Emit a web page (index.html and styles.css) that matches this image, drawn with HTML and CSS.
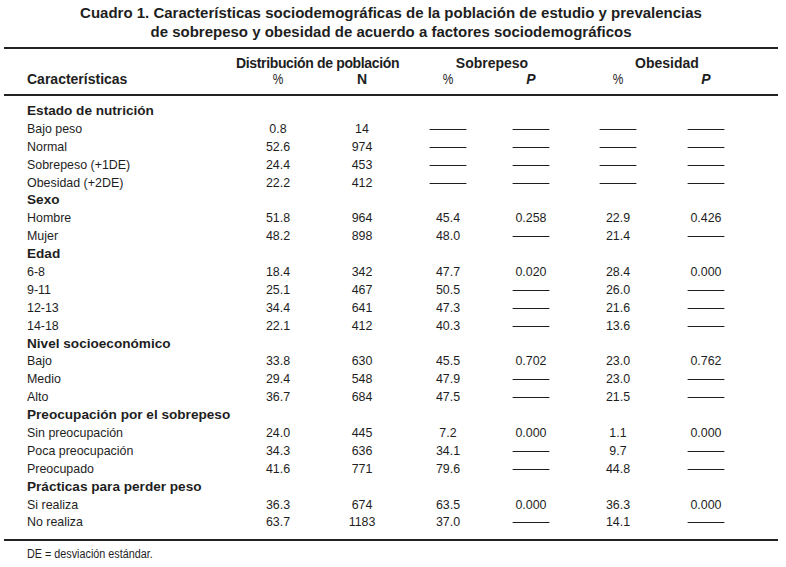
FILE: index.html
```html
<!DOCTYPE html>
<html lang="es">
<head>
<meta charset="utf-8">
<title>Cuadro 1</title>
<link rel="stylesheet" href="styles.css">
</head>
<body>
<div class="page">
  <h1 class="title">Cuadro 1. Características sociodemográficas de la población de estudio y prevalencias<br>de sobrepeso y obesidad de acuerdo a factores sociodemográficos</h1>
  <div class="table">
    <div class="thead">
      <div class="row hrow">
        <span></span>
        <span class="span2 g-dist">Distribución de población</span>
        <span class="span2 g-sob">Sobrepeso</span>
        <span class="span2 g-obe">Obesidad</span>
        <span></span>
      </div>
      <div class="row hrow">
        <span class="hlab">Características</span>
        <span class="pct">%</span>
        <span>N</span>
        <span class="pct">%</span>
        <span class="pv">P</span>
        <span class="pct">%</span>
        <span class="pv">P</span>
        <span></span>
      </div>
    </div>
    <div class="tbody">
      <div class="row sec"><span class="slab">Estado de nutrición</span></div>
      <div class="row"><span class="lab">Bajo peso</span><span>0.8</span><span>14</span><span><i class="dash"></i></span><span><i class="dash"></i></span><span><i class="dash"></i></span><span><i class="dash"></i></span><span></span></div>
      <div class="row"><span class="lab">Normal</span><span>52.6</span><span>974</span><span><i class="dash"></i></span><span><i class="dash"></i></span><span><i class="dash"></i></span><span><i class="dash"></i></span><span></span></div>
      <div class="row"><span class="lab">Sobrepeso (+1DE)</span><span>24.4</span><span>453</span><span><i class="dash"></i></span><span><i class="dash"></i></span><span><i class="dash"></i></span><span><i class="dash"></i></span><span></span></div>
      <div class="row"><span class="lab">Obesidad (+2DE)</span><span>22.2</span><span>412</span><span><i class="dash"></i></span><span><i class="dash"></i></span><span><i class="dash"></i></span><span><i class="dash"></i></span><span></span></div>

      <div class="row sec"><span class="slab">Sexo</span></div>
      <div class="row"><span class="lab">Hombre</span><span>51.8</span><span>964</span><span>45.4</span><span>0.258</span><span>22.9</span><span>0.426</span><span></span></div>
      <div class="row"><span class="lab">Mujer</span><span>48.2</span><span>898</span><span>48.0</span><span><i class="dash"></i></span><span>21.4</span><span><i class="dash"></i></span><span></span></div>

      <div class="row sec"><span class="slab">Edad</span></div>
      <div class="row"><span class="lab">6-8</span><span>18.4</span><span>342</span><span>47.7</span><span>0.020</span><span>28.4</span><span>0.000</span><span></span></div>
      <div class="row"><span class="lab">9-11</span><span>25.1</span><span>467</span><span>50.5</span><span><i class="dash"></i></span><span>26.0</span><span><i class="dash"></i></span><span></span></div>
      <div class="row"><span class="lab">12-13</span><span>34.4</span><span>641</span><span>47.3</span><span><i class="dash"></i></span><span>21.6</span><span><i class="dash"></i></span><span></span></div>
      <div class="row"><span class="lab">14-18</span><span>22.1</span><span>412</span><span>40.3</span><span><i class="dash"></i></span><span>13.6</span><span><i class="dash"></i></span><span></span></div>

      <div class="row sec"><span class="slab">Nivel socioeconómico</span></div>
      <div class="row"><span class="lab">Bajo</span><span>33.8</span><span>630</span><span>45.5</span><span>0.702</span><span>23.0</span><span>0.762</span><span></span></div>
      <div class="row"><span class="lab">Medio</span><span>29.4</span><span>548</span><span>47.9</span><span><i class="dash"></i></span><span>23.0</span><span><i class="dash"></i></span><span></span></div>
      <div class="row"><span class="lab">Alto</span><span>36.7</span><span>684</span><span>47.5</span><span><i class="dash"></i></span><span>21.5</span><span><i class="dash"></i></span><span></span></div>

      <div class="row sec"><span class="slab">Preocupación por el sobrepeso</span></div>
      <div class="row"><span class="lab">Sin preocupación</span><span>24.0</span><span>445</span><span>7.2</span><span>0.000</span><span>1.1</span><span>0.000</span><span></span></div>
      <div class="row"><span class="lab">Poca preocupación</span><span>34.3</span><span>636</span><span>34.1</span><span><i class="dash"></i></span><span>9.7</span><span><i class="dash"></i></span><span></span></div>
      <div class="row"><span class="lab">Preocupado</span><span>41.6</span><span>771</span><span>79.6</span><span><i class="dash"></i></span><span>44.8</span><span><i class="dash"></i></span><span></span></div>

      <div class="row sec"><span class="slab">Prácticas para perder peso</span></div>
      <div class="row"><span class="lab">Si realiza</span><span>36.3</span><span>674</span><span>63.5</span><span>0.000</span><span>36.3</span><span>0.000</span><span></span></div>
      <div class="row"><span class="lab">No realiza</span><span>63.7</span><span>1183</span><span>37.0</span><span><i class="dash"></i></span><span>14.1</span><span><i class="dash"></i></span><span></span></div>
    </div>
  </div>
  <p class="note"><span class="note-t">DE = desviación estándar.</span></p>
</div>
</body>
</html>
```

FILE: styles.css
```css
html, body {
  margin: 0;
  padding: 0;
  background: #ffffff;
}

body {
  color: #1e1e1e;
  font-family: "Liberation Sans", Arial, sans-serif;
}

.page {
  width: 774px;
  padding: 3px 8px 0 4px;
}

.title {
  margin: 0 0 6px 0;
  font-weight: bold;
  font-size: 15px;
  line-height: 19px;
  text-align: center;
  white-space: nowrap;
}

.table {
  width: 774px;
}

.thead {
  border-top: 2px solid #222;
  border-bottom: 2px solid #222;
  padding: 6px 0 7px 0;
}

.row {
  display: grid;
  grid-template-columns: 232px 84px 84px 88px 78px 96px 80px 32px;
  align-items: center;
  text-align: center;
  white-space: nowrap;
}

.hrow {
  height: 16px;
  font-weight: bold;
  font-size: 14px;
  line-height: 16px;
}

.hlab {
  text-align: left;
  padding-left: 23px;
}

.hrow .pct {
  font-weight: normal;
  transform: scaleX(0.85);
}

.span2 {
  grid-column: span 2;
}

.g-dist {
  padding-right: 20px;
  letter-spacing: -0.35px;
}

.g-sob {
  padding-left: 10px;
}

.g-obe {
  padding-left: 18px;
}

.pv {
  font-style: italic;
}

.tbody {
  padding: 6px 0 8px 0;
  border-bottom: 2px solid #222;
}

.tbody .row {
  height: 17.9px;
  font-size: 13.5px;
  line-height: 17.9px;
}

.tbody .row > span {
  transform: scaleX(0.92);
  transform-origin: 50% 50%;
}

.tbody .row > .lab {
  text-align: left;
  padding-left: 23px;
  transform-origin: 23px 50%;
}

.tbody .sec > .slab {
  grid-column: 1 / span 4;
  text-align: left;
  padding-left: 23px;
  font-weight: bold;
  font-size: 13.6px;
  transform: none;
}

.dash {
  display: inline-block;
  width: 40px;
  height: 1px;
  background: #1e1e1e;
  vertical-align: middle;
}

.note {
  margin: 6px 0 0 0;
  padding-left: 23px;
  font-size: 12px;
  line-height: 14px;
}

.note-t {
  display: inline-block;
  transform: scaleX(0.9);
  transform-origin: 0 50%;
}
```
